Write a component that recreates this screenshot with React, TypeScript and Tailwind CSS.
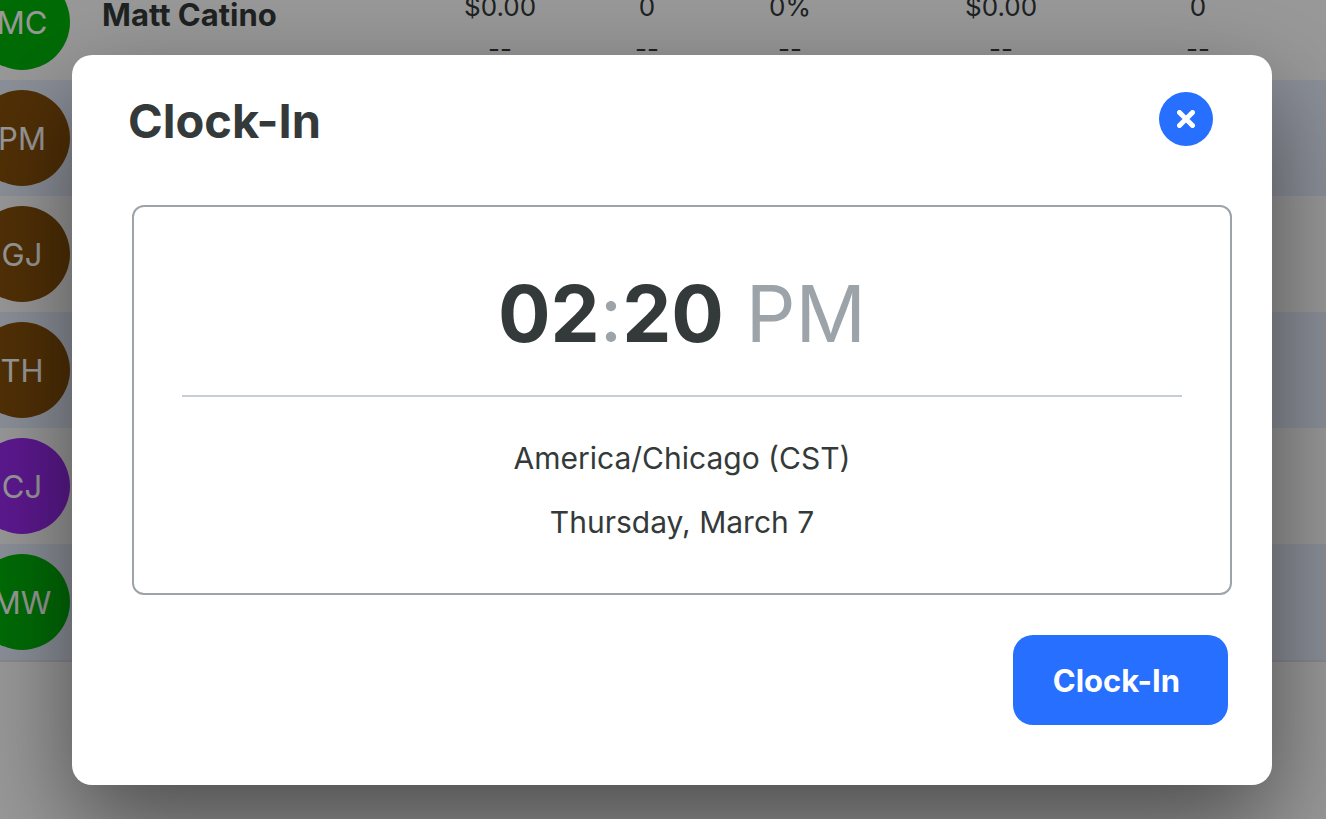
import { clsx } from 'clsx';

interface Employee {
  initials: string;
  name: string;
  color: string;
}

const employees: Employee[] = [
  { initials: 'MC', name: 'Matt Catino', color: 'bg-[#00b50a]' },
  { initials: 'PM', name: '', color: 'bg-[#88500b]' },
  { initials: 'GJ', name: '', color: 'bg-[#88500b]' },
  { initials: 'TH', name: '', color: 'bg-[#88500b]' },
  { initials: 'CJ', name: '', color: 'bg-[#9b2af0]' },
  { initials: 'MW', name: '', color: 'bg-[#00b50a]' },
];

const stats = ['$0.00', '0', '0%', '$0.00', '0'];

function EmployeeTable() {
  return (
    <div className="-mt-9 border-b-2 border-[#e8e5e3]">
      <table className="w-full table-fixed">
        <colgroup>
          <col className="w-[102px]" />
          <col className="w-[310px]" />
          <col className="w-[176px]" />
          <col className="w-[118px]" />
          <col className="w-[168px]" />
          <col className="w-[254px]" />
          <col className="w-[140px]" />
          <col />
        </colgroup>
        <tbody>
          {employees.map((employee) => (
            <tr key={employee.initials} className="h-[116px] even:bg-[#e9f0ff]">
              <td className="p-0">
                <div
                  className={clsx(
                    '-ml-[26px] flex size-24 items-center justify-center rounded-full pt-0.5 text-[31px] text-white',
                    employee.color,
                  )}
                >
                  {employee.initials}
                </div>
              </td>
              <td className="p-0 pb-3.5 text-[31px] font-bold">{employee.name}</td>
              {stats.map((value, i) => (
                <td key={i} className="p-0 pt-3 text-center text-[26px] leading-[42px]">
                  {employee.name && (
                    <>
                      <div>{value}</div>
                      <div>--</div>
                    </>
                  )}
                </td>
              ))}
              <td />
            </tr>
          ))}
        </tbody>
      </table>
    </div>
  );
}

function ClockInDialog() {
  return (
    <div
      role="dialog"
      aria-modal="true"
      aria-labelledby="clock-in-title"
      className="w-full rounded-[20px] bg-white pt-[37px] pr-10 pb-15 pl-15 shadow-[0_40px_100px_rgba(0,0,0,0.5)]"
    >
      {/* Header */}
      <div className="flex items-start justify-between pr-[19px]">
        <h1 id="clock-in-title" className="-ml-1 text-[47px] leading-[58px] font-bold">
          Clock-In
        </h1>
        <button
          type="button"
          aria-label="Close"
          className="flex size-[54px] items-center justify-center rounded-full bg-[#266fff] text-white"
        >
          <svg className="size-[18px]" viewBox="0 0 18 18" fill="none" stroke="currentColor" strokeWidth="5" strokeLinecap="round">
            <path d="M2.5 2.5l13 13M15.5 2.5l-13 13" />
          </svg>
        </button>
      </div>

      {/* Current time */}
      <div className="mt-[55px] rounded-xl border-2 border-[#9ca4aa] px-12 pt-[59px] pb-[51px] text-center">
        <p className="text-[78px] leading-[96px] text-[#9ca4aa]">
          <span className="font-bold text-[#343a3a]">02</span>:<span className="font-bold text-[#343a3a]">20</span> PM
        </p>
        <hr className="mt-[33px] mb-[41px] border-t-2 border-[#c8ced3]" />
        <p className="text-[30px] leading-10">America/Chicago (CST)</p>
        <p className="mt-6 text-[30px] leading-10">Thursday, March 7</p>
      </div>

      <div className="mt-10 flex justify-end pr-1">
        <button type="button" className="h-[90px] rounded-[20px] bg-[#266fff] pt-0.5 pr-12 pl-10 text-[31px] font-bold text-white">
          Clock-In
        </button>
      </div>
    </div>
  );
}

export default function App() {
  return (
    <main className="relative min-h-screen overflow-hidden bg-white font-[Inter,sans-serif] text-[#343a3a]">
      <EmployeeTable />
      {/* Overlay */}
      <div className="absolute inset-0 flex items-start bg-black/40 pt-[55px] pr-[54px] pl-[72px]">
        <ClockInDialog />
      </div>
    </main>
  );
}
